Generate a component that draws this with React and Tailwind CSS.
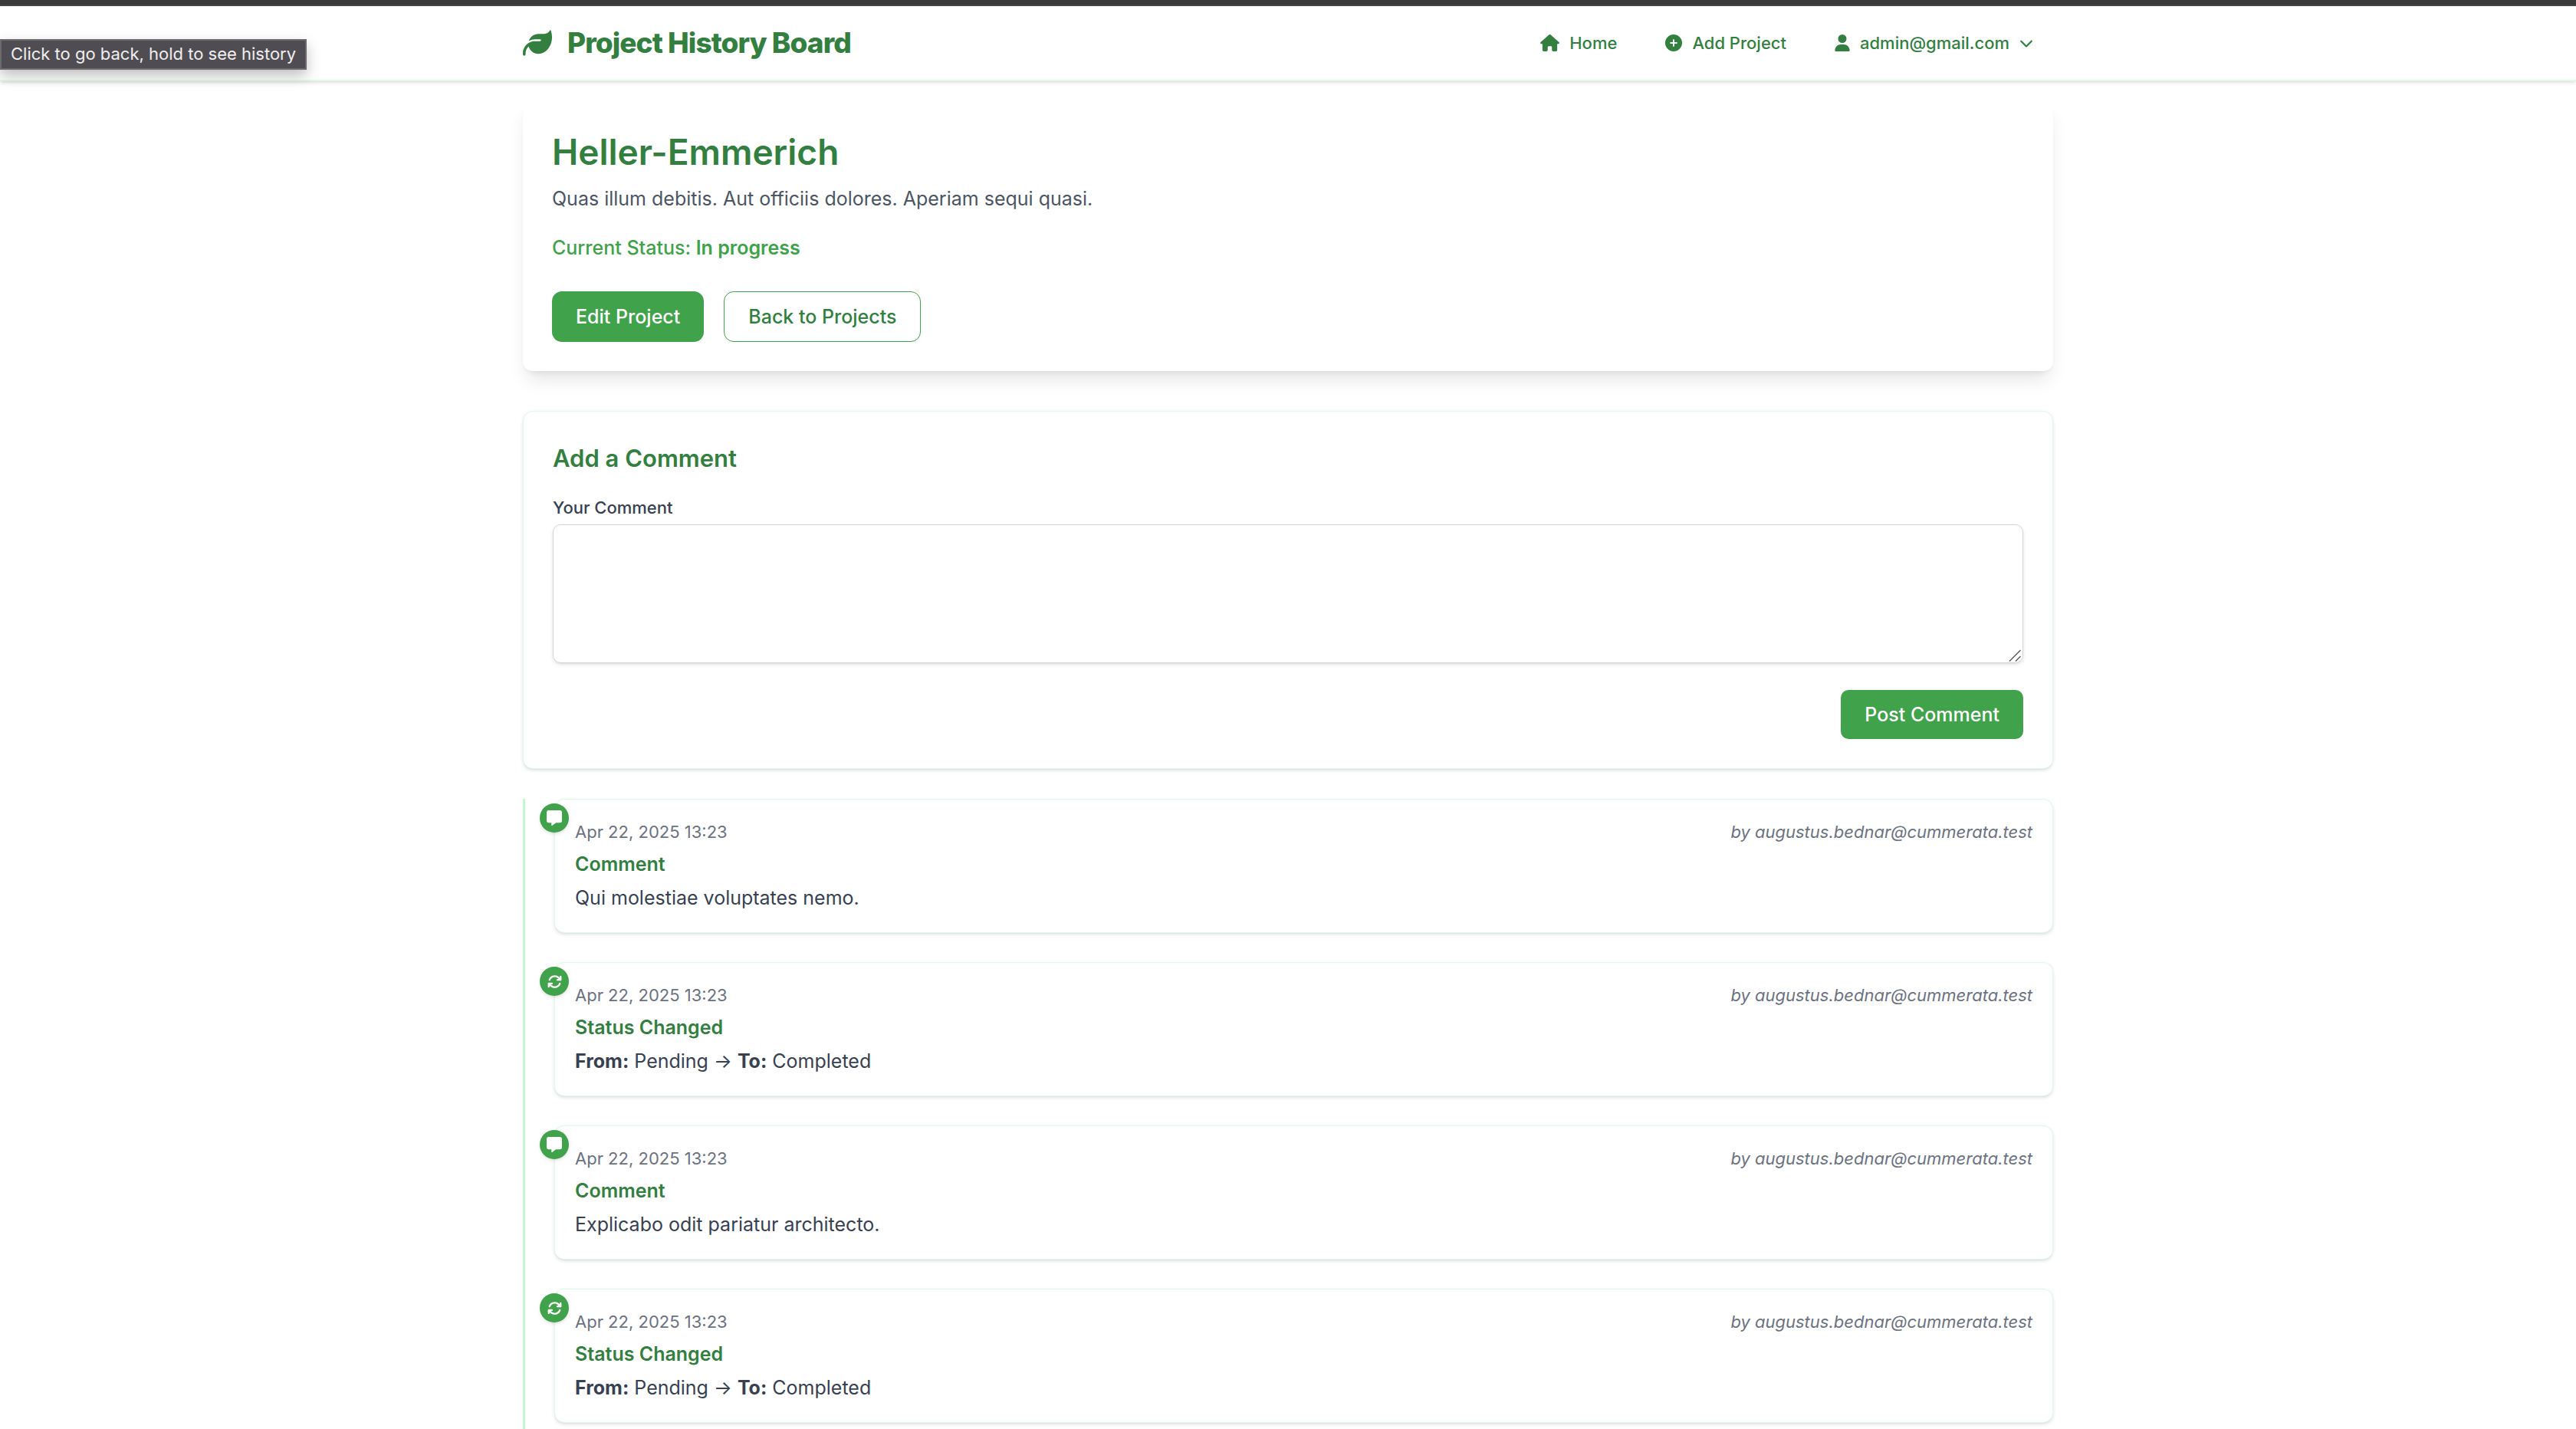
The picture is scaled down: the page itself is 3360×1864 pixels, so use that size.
import {
  FaLeaf,
  FaHouse,
  FaCirclePlus,
  FaUser,
  FaChevronDown,
  FaMessage,
  FaArrowsRotate,
} from "react-icons/fa6";

const events = [
  { id: 1, type: "comment", body: "Qui molestiae voluptates nemo." },
  { id: 2, type: "status", from: "Pending", to: "Completed" },
  { id: 3, type: "comment", body: "Explicabo odit pariatur architecto." },
  { id: 4, type: "status", from: "Pending", to: "Completed" },
];

function Navbar() {
  return (
    <header className="border-b-2 border-[#e0fae8] bg-white shadow-[0_2px_5px_rgba(0,0,0,0.1),0_2px_3px_-2px_rgba(0,0,0,0.1)]">
      <div className="mx-auto flex h-24 max-w-[1996px] items-center justify-between">
        <a href="#" className="flex items-center gap-5 text-[37px] font-extrabold tracking-tight">
          <FaLeaf className="size-[38px]" />
          Project History Board
        </a>
        <nav className="flex items-center gap-[11px] text-[22px] leading-8 font-medium">
          <a href="#" className="flex items-center gap-[13px] px-[26px]">
            <FaHouse className="h-[22px] w-[25px]" />
            Home
          </a>
          <a href="#" className="flex items-center gap-[13px] px-[26px]">
            <FaCirclePlus className="size-[22px]" />
            Add Project
          </a>
          <button type="button" className="flex items-center gap-[13px] px-[26px]">
            <FaUser className="h-[22px] w-5" />
            admin@gmail.com
            <FaChevronDown className="size-[18px]" />
          </button>
        </nav>
      </div>
    </header>
  );
}

function ProjectCard() {
  return (
    <section className="rounded-[13px] bg-white p-[38px] shadow-[0_16px_24px_-5px_rgba(0,0,0,0.1),0_6px_10px_-6px_rgba(0,0,0,0.1)]">
      <h1 className="text-[46px] leading-[58px] font-semibold">Heller-Emmerich</h1>
      <p className="mt-[13px] text-[#4b5563]">Quas illum debitis. Aut officiis dolores. Aperiam sequi quasi.</p>
      <p className="mt-[26px] font-medium text-[#40a24a]">
        Current Status: <span className="font-semibold">In progress</span>
      </p>
      <div className="mt-[38px] flex gap-[26px]">
        <a href="#" className="flex items-center rounded-[13px] bg-[#40a24a] px-[31px] font-medium text-white">
          Edit Project
        </a>
        <a href="#" className="rounded-[13px] border border-[#40a24a] px-[31px] py-[13px] font-medium">
          Back to Projects
        </a>
      </div>
    </section>
  );
}

function CommentForm() {
  return (
    <form className="mt-[52px] rounded-[13px] border border-[#dcfce7] bg-white p-[38px] shadow-[0_2px_5px_rgba(0,0,0,0.1),0_2px_3px_-2px_rgba(0,0,0,0.1)]">
      <h2 className="text-[31px] leading-[45px] font-semibold">Add a Comment</h2>
      <label htmlFor="comment" className="mt-[26px] block text-[22px] leading-8 font-medium text-[#374151]">
        Your Comment
      </label>
      <div className="relative mt-[6px]">
        <textarea
          id="comment"
          className="block h-[181px] w-full resize-y rounded-[10px] border border-[#d1d5db] px-5 py-3 shadow-[0_2px_5px_rgba(0,0,0,0.1),0_2px_3px_-2px_rgba(0,0,0,0.1)] [&::-webkit-resizer]:hidden"
        />
        <svg
          aria-hidden="true"
          viewBox="0 0 16 16"
          className="pointer-events-none absolute right-[3px] bottom-[2px] size-4"
          fill="none"
          stroke="#5c5c5c"
          strokeWidth="1.5"
        >
          <path d="M1 15.5 15.500 1M9 15.500 15.500 9" />
        </svg>
      </div>
      <div className="mt-[35px] flex justify-end">
        <button type="button" className="rounded-[10px] bg-[#40a24a] px-[31px] py-[13px] font-medium text-white">
          Post Comment
        </button>
      </div>
    </form>
  );
}

function TimelineItem({ event }) {
  const isComment = event.type === "comment";
  return (
    <li className="relative rounded-[13px] border border-[#dcfce7] bg-white p-[26px] shadow-[0_2px_5px_rgba(0,0,0,0.1),0_2px_3px_-2px_rgba(0,0,0,0.1)]">
      <span className="absolute top-[5px] -left-5 flex size-[38px] items-center justify-center rounded-full bg-[#40a24a] text-white shadow-[0_2px_5px_rgba(0,0,0,0.1),0_2px_3px_-2px_rgba(0,0,0,0.1)]">
        {isComment ? <FaMessage className="size-5" /> : <FaArrowsRotate className="size-[19px]" />}
      </span>
      <div className="flex justify-between text-[22px] leading-8 text-[#6b7280]">
        <time dateTime="2025-04-22T13:23">Apr 22, 2025 13:23</time>
        <span className="italic">by augustus.bednar@cummerata.test</span>
      </div>
      <h3 className="mt-[7px] font-semibold">{isComment ? "Comment" : "Status Changed"}</h3>
      <p className="mt-[6px] text-[#374151]">
        {isComment ? (
          event.body
        ) : (
          <>
            <strong>From:</strong> {event.from} → <strong>To:</strong> {event.to}
          </>
        )}
      </p>
    </li>
  );
}

export default function App() {
  return (
    <div className="h-screen overflow-hidden bg-white font-['Inter',sans-serif] text-[25px] leading-[38px] text-[#327f3f]">
      <div className="h-2 border-b-2 border-[#474547] bg-[#3a3a3a]" />
      <Navbar />
      <div
        role="tooltip"
        className="absolute top-[51px] left-0 border-2 border-[#6d6b6f] bg-[#504d52] px-3 pb-[5px] pt-[3px] text-[22px] leading-7 text-[#efeef0] shadow-[0_8px_18px_rgba(0,0,0,0.25)]"
      >
        Click to go back, hold to see history
      </div>
      <main className="mx-auto max-w-[1996px] pt-[25px]">
        <ProjectCard />
        <CommentForm />
        <ol className="mt-[39px] flex flex-col gap-[38px] border-l-[3px] border-[#c2f7cf] pb-[38px] pl-[38px]">
          {events.map((event) => (
            <TimelineItem key={event.id} event={event} />
          ))}
        </ol>
      </main>
    </div>
  );
}
